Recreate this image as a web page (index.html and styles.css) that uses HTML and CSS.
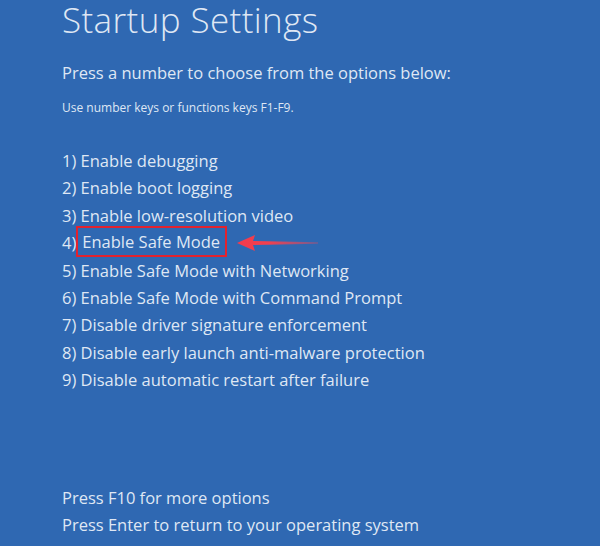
FILE: index.html
```html
<!DOCTYPE html>
<html>
<head>
<meta charset="utf-8">
<link rel="stylesheet" href="styles.css">
</head>
<body>
<div class="screen">
  <h1 class="title">Startup Settings</h1>
  <p class="lead">Press a number to choose from the options below:</p>
  <p class="hint">Use number keys or functions keys F1-F9.</p>
  <ul class="options">
    <li>1) Enable debugging</li>
    <li>2) Enable boot logging</li>
    <li>3) Enable low-resolution video</li>
    <li class="marked">4)<span class="box">Enable Safe Mode</span><svg class="arrow" width="90" height="20" viewBox="0 0 90 20"><defs><linearGradient id="g" x1="0" x2="1" y1="0" y2="0"><stop offset="0" stop-color="#f43a4c"/><stop offset="0.4" stop-color="#f0404f"/><stop offset="1" stop-color="#e8485a" stop-opacity="0.35"/></linearGradient></defs><path d="M1 10 L19 2 L17 8 L82 9.3 L82 10.7 L17 12 L19 18 Z" fill="url(#g)"/></svg></li>
    <li>5) Enable Safe Mode with Networking</li>
    <li>6) Enable Safe Mode with Command Prompt</li>
    <li>7) Disable driver signature enforcement</li>
    <li>8) Disable early launch anti-malware protection</li>
    <li>9) Disable automatic restart after failure</li>
  </ul>
  <div class="footer">
    <p>Press F10 for more options</p>
    <p>Press Enter to return to your operating system</p>
  </div>
</div>
</body>
</html>
```
FILE: styles.css
```css
html, body {
  margin: 0;
  padding: 0;
}
body {
  background: #2f68b2;
  font-family: "Open Sans", "Noto Sans", sans-serif;
  color: #dfe7f4;
}
.screen {
  width: 600px;
  height: 546px;
  box-sizing: border-box;
  padding: 0 0 8px 62px;
  display: flex;
  flex-direction: column;
}
.title {
  margin: 0;
  font-size: 35px;
  font-weight: 300;
  line-height: 40px;
  letter-spacing: 0.4px;
}
.lead {
  margin: 22px 0 0 0;
  font-size: 16.5px;
  line-height: 22px;
}
.hint {
  margin: 16px 0 0 0;
  font-size: 12px;
  line-height: 16px;
}
.options {
  list-style: none;
  margin: 31px 0 0 0;
  padding: 0;
}
.options li {
  font-size: 16.5px;
  line-height: 27.4px;
  white-space: nowrap;
}
.marked {
  position: relative;
}
.box {
  display: inline-block;
  border: 2px solid #e3222e;
  padding: 0 5px 0 4px;
  margin: -3px 0 -3px 0;
  line-height: 27px;
  vertical-align: top;
}
.arrow {
  position: absolute;
  left: 174px;
  top: 4px;
}
.footer {
  margin-top: auto;
}
.footer p {
  margin: 0;
  font-size: 16.5px;
  line-height: 27px;
}
```
